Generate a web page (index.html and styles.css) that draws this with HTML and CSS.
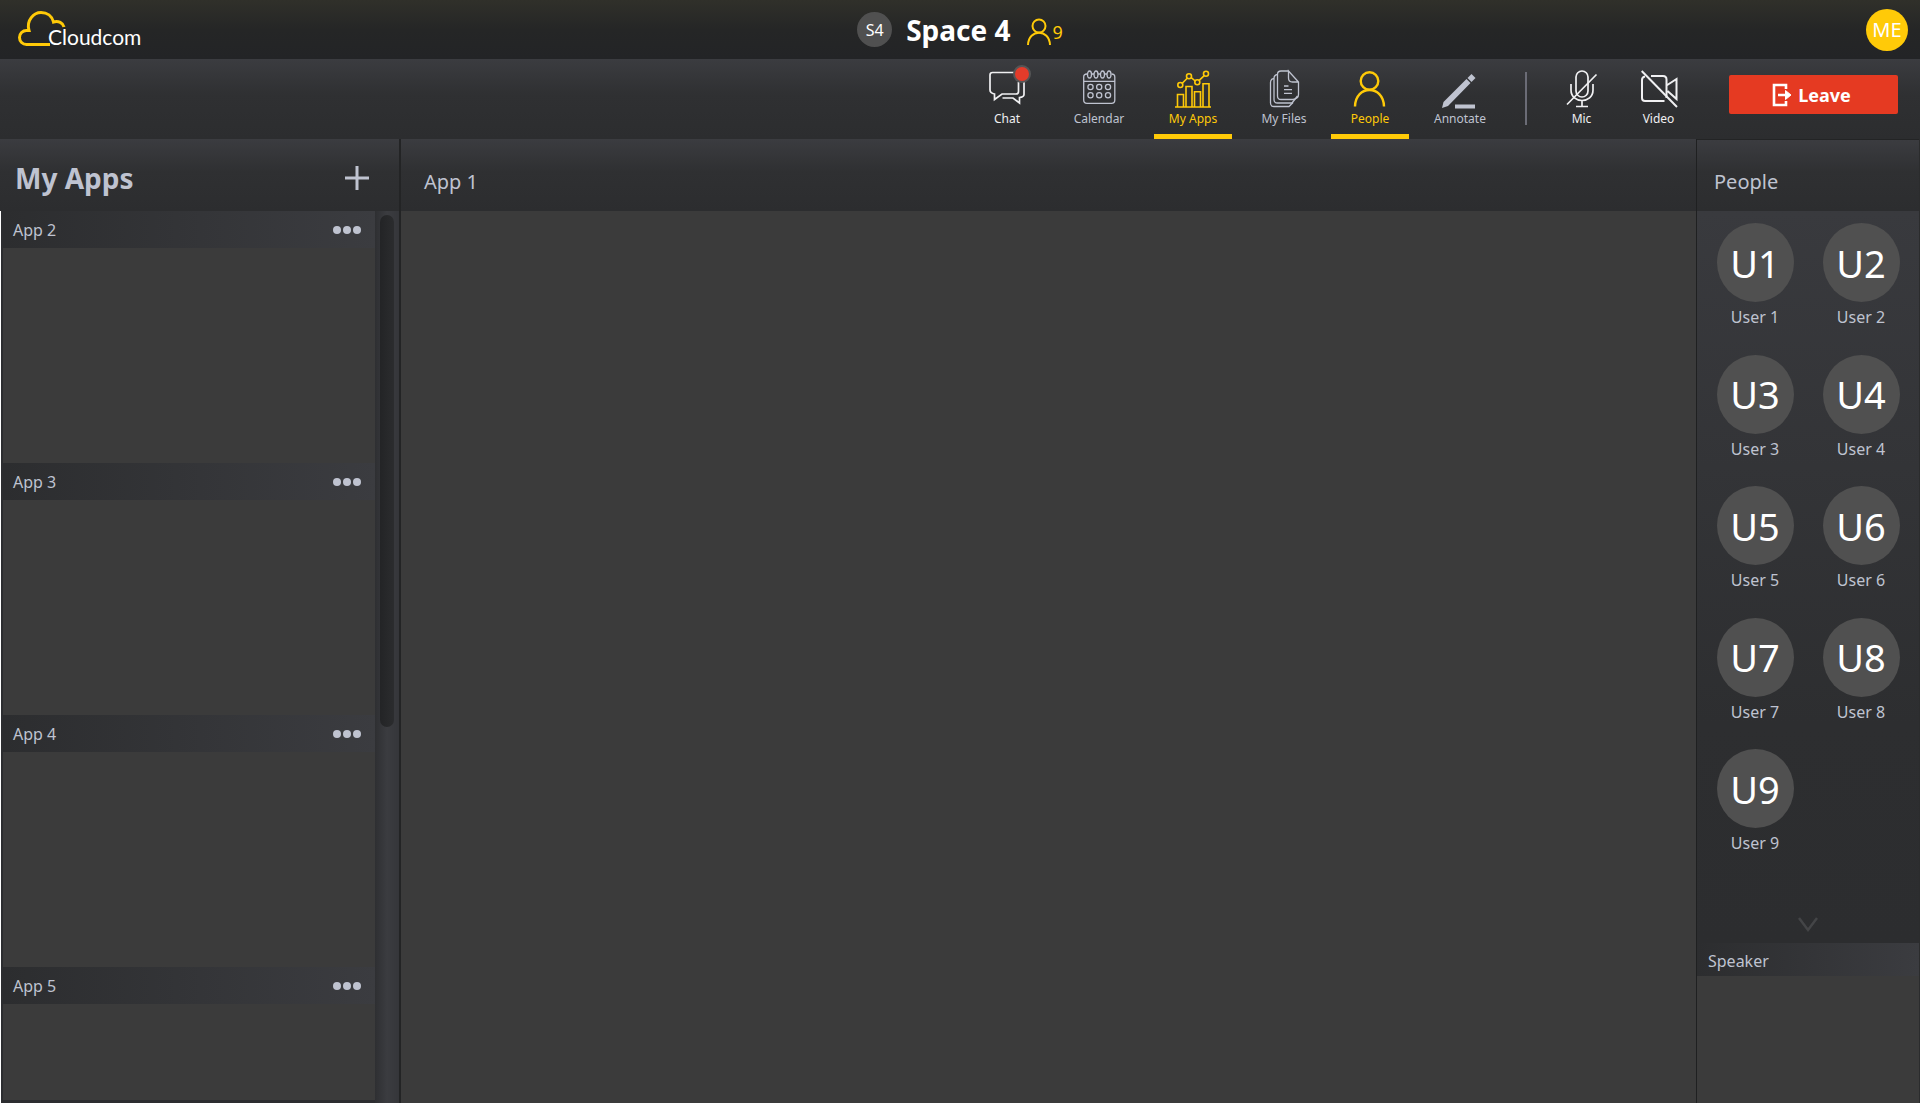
FILE: index.html
```html
<!DOCTYPE html>
<html lang="en">
<head>
<meta charset="utf-8">
<title>Cloudcom – Space 4</title>
<link rel="stylesheet" href="styles.css">
</head>
<body>
<div class="app">
  <header class="topbar">
    <a class="logo" href="#" aria-label="Cloudcom">
      <svg width="130" height="40" viewBox="0 0 130 40">
        <path d="M32 34.500H8.500a7 7 0 0 1 0-14h2.500C8 10 16 2.500 23 2.500c6 0 11 3.500 12.500 9.500 5-1.500 9.500 1 10.500 5" fill="none" stroke="#ffca08" stroke-width="3"/>
        <text x="30" y="35" class="logo-text">Cloudcom</text>
      </svg>
    </a>
    <div class="space">
      <span class="space-badge">S4</span>
      <h1 class="space-name">Space 4</h1>
      <span class="space-count">
        <svg width="24" height="28" viewBox="0 0 24 28" fill="none" stroke="#ffca08" stroke-width="2"><circle cx="12" cy="8" r="6.500"/><path d="M1 27C1.500 10.500 22.500 10.500 23 27"/></svg>
        <span>9</span>
      </span>
    </div>
    <button class="me" type="button">ME</button>
  </header>

  <div class="toolbar">
    <nav class="tools">
      <button class="tool bright" type="button">
        <svg class="icon" viewBox="0 0 40 40" stroke-width="1.700">
          <path d="M31.500 12v9.500q0 2.500-2.500 2.500H15L7.500 29.500V24Q3 23 3 20V5q0-2.500 2.500-2.500H28"/>
          <path d="M37 12v12.500q0 2.500-4.500 3v5.500L26 28H15.500"/>
          <circle cx="35" cy="4" r="9" fill="#555556" stroke="none"/><circle cx="35" cy="4" r="7" fill="#e43b2a" stroke="none"/>
        </svg>
        <span>Chat</span>
      </button>
      <button class="tool" type="button">
        <svg class="icon" viewBox="0 0 40 40" stroke-width="1.300">
          <path d="M8 4Q4.700 4 4.700 7v23q0 3.300 3.300 3.300h24.500q3.300 0 3.300-3.300V7q0-3-3.300-3M4.700 11.300h31"/>
          <ellipse cx="10.500" cy="4.500" rx="2" ry="3.500"/><ellipse cx="17" cy="4.500" rx="2" ry="3.500"/><ellipse cx="23.500" cy="4.500" rx="2" ry="3.500"/><ellipse cx="30" cy="4.500" rx="2" ry="3.500"/>
          <path d="M12.500 4h2.500M19 4h2.500M25.500 4h2.500"/>
          <circle cx="11.500" cy="17" r="2.600"/><circle cx="20.200" cy="17" r="2.600"/><circle cx="29" cy="17" r="2.600"/>
          <circle cx="11.500" cy="25.300" r="2.600"/><circle cx="20.200" cy="25.300" r="2.600"/><circle cx="29" cy="25.300" r="2.600"/>
        </svg>
        <span>Calendar</span>
      </button>
      <button class="tool active" type="button" aria-pressed="true">
        <svg class="icon" viewBox="0 0 40 40" stroke-width="1.600">
          <path d="M2 37h36M4.500 37V24.500h6V37M13 37V16.500h6V37M21.500 37V21.700h6V37M30 37V13.700h6V37"/>
          <path d="M9.300 13.200L14.200 8.200M18.200 7.700L22.300 11M26.200 10.300L31.200 5.700"/>
          <circle cx="7.300" cy="15" r="2.500"/><circle cx="16" cy="6.300" r="2.500"/><circle cx="24.300" cy="12.300" r="2.500"/><circle cx="33" cy="3.700" r="2.500"/>
        </svg>
        <span>My Apps</span>
      </button>
      <button class="tool" type="button">
        <svg class="icon" viewBox="0 0 40 40" stroke-width="1.300">
          <path d="M24.500 1H17q-3.500 0-3.500 3.500v21.500q0 3.500 3.500 3.500h12q5.500-1 5.500-5V12L24.500 1v7q0 4 4 4h6"/>
          <path d="M13.500 4.500Q10 5 10 8.500v21q0 3.500 3.500 3.500H28l5.500-7"/>
          <path d="M10 8.500Q6.500 9 6.500 12.500V33q0 3.500 3.500 3.500h15l4-4"/>
          <path d="M20 16h4.500M20 19.700h8M20 23.300h8"/>
        </svg>
        <span>My Files</span>
      </button>
      <button class="tool active" type="button" aria-pressed="true">
        <svg class="icon" viewBox="0 0 40 40" stroke-width="2.400">
          <circle cx="19.500" cy="11" r="8.800"/><path d="M5 36.500C5.500 14.500 33.500 14.500 34 36.500"/>
        </svg>
        <span>People</span>
      </button>
      <button class="tool" type="button">
        <svg class="icon" viewBox="0 0 40 40">
          <path d="M2 38l1.500-6L26.500 9l4 4L8 36zM27.500 8l4-4 4 4-4 4zM15 34.500h20v4H15z" fill="currentColor" stroke="none"/>
        </svg>
        <span>Annotate</span>
      </button>
    </nav>
    <div class="divider"></div>
    <div class="media">
      <button class="tool bright" type="button">
        <svg class="icon" viewBox="0 0 40 40" stroke-width="1.700">
          <rect x="14" y="1" width="12" height="26" rx="6"/><path d="M9 14v6c0 14 22 14 22 0v-6M20 31v5.500M14 36.500h12M5 34.500L34.500 4.500"/>
        </svg>
        <span>Mic</span>
      </button>
      <button class="tool bright" type="button">
        <svg class="icon" viewBox="0 0 40 40" stroke-width="2">
          <path d="M12 6h12q3.500 0 3.500 3.500V28M6 6.500Q3 7 3 10v18q0 3 3 3h19.500M27.500 15.500L37.500 9v20l-9-8"/><path d="M2.700 1L38 37"/>
        </svg>
        <span>Video</span>
      </button>
    </div>
    <button class="leave" type="button">
      <svg width="20" height="24" viewBox="0 0 20 24" fill="none" stroke="#fff" stroke-width="2.600"><path d="M14 6V2H2v20h12v-4M6 12h11"/><path d="M13.500 7.500v9L19 12z" fill="#fff" stroke-width="1"/></svg>
      <span>Leave</span>
    </button>
  </div>

  <main class="workspace">
    <aside class="apps">
      <div class="panel-head apps-head">
        <h2 class="apps-title">My Apps</h2>
        <button class="add" type="button" aria-label="Add app">
          <svg width="24" height="24" viewBox="0 0 24 24" stroke="#bfc3d0" stroke-width="3"><path d="M12 0v24M0 12h24"/></svg>
        </button>
      </div>
      <div class="apps-body">
        <div class="app-list">
          <section class="card"><header class="card-head"><span>App 2</span><button class="more" type="button" aria-label="App 2 options"><i></i><i></i><i></i></button></header></section>
          <section class="card"><header class="card-head"><span>App 3</span><button class="more" type="button" aria-label="App 3 options"><i></i><i></i><i></i></button></header></section>
          <section class="card"><header class="card-head"><span>App 4</span><button class="more" type="button" aria-label="App 4 options"><i></i><i></i><i></i></button></header></section>
          <section class="card"><header class="card-head"><span>App 5</span><button class="more" type="button" aria-label="App 5 options"><i></i><i></i><i></i></button></header></section>
        </div>
        <div class="track"><div class="thumb"></div></div>
      </div>
    </aside>

    <section class="stage">
      <div class="panel-head stage-head"><h2 class="panel-title">App 1</h2></div>
    </section>

    <aside class="people">
      <div class="panel-head people-head"><h2 class="panel-title">People</h2></div>
      <div class="people-body">
        <ul class="users">
          <li class="user"><span class="avatar">U1</span><span>User 1</span></li>
          <li class="user"><span class="avatar">U2</span><span>User 2</span></li>
          <li class="user"><span class="avatar">U3</span><span>User 3</span></li>
          <li class="user"><span class="avatar">U4</span><span>User 4</span></li>
          <li class="user"><span class="avatar">U5</span><span>User 5</span></li>
          <li class="user"><span class="avatar">U6</span><span>User 6</span></li>
          <li class="user"><span class="avatar">U7</span><span>User 7</span></li>
          <li class="user"><span class="avatar">U8</span><span>User 8</span></li>
          <li class="user"><span class="avatar">U9</span><span>User 9</span></li>
        </ul>
        <button class="scroll-down" type="button" aria-label="Show more people">
          <svg width="20" height="16" viewBox="0 0 20 16" fill="none" stroke="#444547" stroke-width="2.500"><path d="M1 1l9 12 9-12"/></svg>
        </button>
      </div>
      <h3 class="speaker">Speaker</h3>
      <div class="speaker-view"></div>
    </aside>
  </main>
</div>
</body>
</html>
```
FILE: styles.css
```css
* { box-sizing: border-box; }

body {
  margin: 0;
  background: #fff;
  color: #bfc3d0;
  font-family: "Noto Sans", "Open Sans", sans-serif;
  font-size: 16px;
}

h1, h2, h3, ul { margin: 0; padding: 0; font-weight: 400; }
ul { list-style: none; }
svg { display: block; }

button {
  border: 0;
  padding: 0;
  background: none;
  color: inherit;
  font: inherit;
  cursor: pointer;
}

.app {
  display: flex;
  flex-direction: column;
  height: calc(100vh - 1px);
  overflow: hidden;
}

/* Top bar */
.topbar {
  flex: none;
  display: grid;
  grid-template-columns: 1fr auto 1fr;
  align-items: center;
  height: 59px;
  padding: 0 12px;
  background: linear-gradient(#30302a, #252626 50%, #232426);
}

.logo { justify-self: start; margin-left: 6px; }
.logo-text { fill: #fff; font-family: Lato, sans-serif; font-size: 21px; }

.space { display: flex; align-items: center; color: #fff; }

.space-badge {
  display: grid;
  place-items: center;
  width: 35px;
  height: 35px;
  margin-right: 14px;
  border-radius: 50%;
  background: #505050;
  font-size: 16px;
}

.space-name { font-size: 28px; font-weight: 700; line-height: 36px; }

.space-count {
  display: flex;
  align-items: center;
  gap: 2px;
  margin-left: 16px;
  padding-top: 4px;
  color: #ffca08;
  font-size: 18px;
}

.me {
  justify-self: end;
  width: 42px;
  height: 42px;
  border-radius: 50%;
  background: #ffca08;
  color: #fff;
  font-size: 20px;
}

/* Toolbar */
.toolbar {
  flex: none;
  display: flex;
  justify-content: flex-end;
  height: 80px;
  padding-right: 22px;
  background: linear-gradient(#3b3c40, #2f3032 45%, #2c2d2f);
}

.tools {
  display: grid;
  grid-template-columns: 92px 92px 96px 86px 86px 94px;
  justify-items: center;
}

.media {
  display: grid;
  grid-template-columns: 77px 77px;
  justify-items: center;
}

.tool {
  display: flex;
  flex-direction: column;
  align-items: center;
  width: 78px;
  padding-top: 11px;
  border-bottom: 5px solid transparent;
  font-size: 12px;
  line-height: 18px;
}

.tool.bright { color: #f0f0f2; }
.tool.active { color: #ffca08; border-color: #ffca08; }

.icon {
  width: 40px;
  height: 40px;
  overflow: visible;
  fill: none;
  stroke: currentColor;
}

.divider {
  width: 2px;
  height: 53px;
  margin: 13px 16px 0 18px;
  background: #6b6c76;
}

.leave {
  display: flex;
  align-items: center;
  justify-content: center;
  gap: 6px;
  width: 169px;
  height: 39px;
  margin: 16px 0 0 32px;
  padding-right: 4px;
  border-radius: 2px;
  background: #e53a22;
  color: #fff;
  font-size: 18px;
  font-weight: 700;
}

/* Workspace */
.workspace {
  flex: 1;
  display: grid;
  grid-template-columns: 401px 1fr 224px;
  min-height: 0;
}

.panel-head {
  flex: none;
  display: flex;
  align-items: center;
  height: 72px;
  background: linear-gradient(#3b3c40, #2f3032 45%, #2c2d2f);
}

.panel-title { font-size: 20px; }

.apps {
  display: flex;
  flex-direction: column;
  min-height: 0;
  border-right: 2px solid #232425;
}

.apps-head { justify-content: space-between; padding: 6px 30px 0 15px; }
.apps-title { font-size: 28px; font-weight: 700; }

.apps-body {
  flex: 1;
  display: flex;
  min-height: 0;
  border-left: 1px solid #fff;
}

.app-list {
  flex: 1;
  border-left: 2px solid #2c2d30;
  border-bottom: 3px solid #2c2d30;
  overflow: hidden;
  background: #3b3b3b;
}

.card { height: 252px; }

.card-head {
  display: flex;
  align-items: center;
  justify-content: space-between;
  height: 37px;
  padding: 0 14px 0 10px;
  background: linear-gradient(90deg, #2c2d2f, #3b3c40);
}

.more { display: flex; gap: 2px; }
.more i { width: 8px; height: 8px; border-radius: 50%; background: #bfc3d0; }

.track {
  width: 24px;
  padding: 4px 5px 0;
  background: linear-gradient(90deg, #2e2f32, #3b3c40 50%, #35363a);
}

.thumb {
  height: 512px;
  border-radius: 7px;
  background: linear-gradient(90deg, #232426, #2b2c2e);
}

.stage { background: #3b3b3b; }
.stage-head { padding: 12px 0 0 23px; }

.people {
  display: flex;
  flex-direction: column;
  min-height: 0;
  border-left: 1px solid #1f2021;
  border-right: 1px solid #2b2c2d;
  background: #3b3b3b;
}

.people-head { padding: 12px 0 0 17px; border-top: 1px solid #232425; }

.people-body {
  flex: none;
  display: flex;
  flex-direction: column;
  align-items: center;
  height: 732px;
  padding-top: 12px;
  background: linear-gradient(#393a3e, #2d2e30 70%, #2c2d2f);
}

.users {
  display: grid;
  grid-template-columns: 77px 77px;
  grid-auto-rows: 1fr;
  column-gap: 29px;
  height: 658px;
}

.user {
  display: flex;
  flex-direction: column;
  align-items: center;
  gap: 4px;
  line-height: 22px;
}

.avatar {
  display: grid;
  place-items: center;
  width: 77px;
  height: 79px;
  border-radius: 50%;
  background: #505050;
  color: #fff;
  font-size: 38px;
}

.scroll-down { margin-top: 36px; }

.speaker {
  flex: none;
  height: 33px;
  padding-left: 11px;
  background: linear-gradient(90deg, #2c2d2f, #3b3c40);
  font-size: 16px;
  line-height: 36px;
}

.speaker-view { flex: 1; }
```
